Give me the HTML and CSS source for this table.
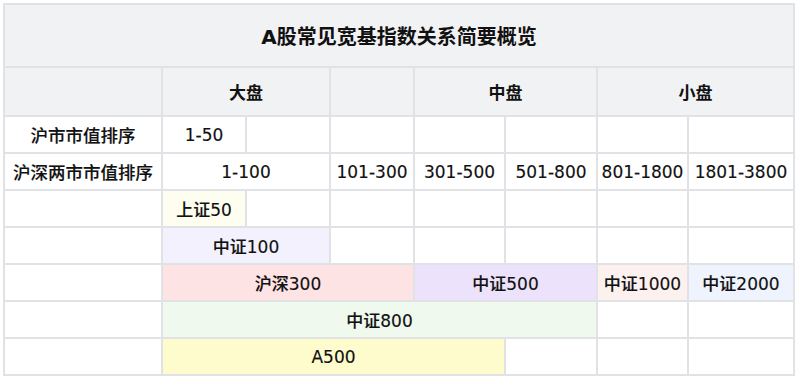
FILE: index.html
```html
<!DOCTYPE html>
<html lang="zh-CN">
<head>
<meta charset="utf-8">
<title>A股常见宽基指数关系简要概览</title>
<link rel="stylesheet" href="styles.css">
</head>
<body>
<div class="grid">
  <div class="cell head title">A股常见宽基指数关系简要概览</div>

  <div class="cell head"></div>
  <div class="cell head bold span2">大盘</div>
  <div class="cell head"></div>
  <div class="cell head bold span2">中盘</div>
  <div class="cell head bold span2">小盘</div>

  <div class="cell label">沪市市值排序</div>
  <div class="cell">1-50</div>
  <div class="cell"></div>
  <div class="cell"></div>
  <div class="cell"></div>
  <div class="cell"></div>
  <div class="cell"></div>
  <div class="cell"></div>

  <div class="cell label">沪深两市市值排序</div>
  <div class="cell span2">1-100</div>
  <div class="cell">101-300</div>
  <div class="cell">301-500</div>
  <div class="cell">501-800</div>
  <div class="cell">801-1800</div>
  <div class="cell">1801-3800</div>

  <div class="cell"></div>
  <div class="cell c-sz50">上证50</div>
  <div class="cell"></div>
  <div class="cell"></div>
  <div class="cell"></div>
  <div class="cell"></div>
  <div class="cell"></div>
  <div class="cell"></div>

  <div class="cell"></div>
  <div class="cell span2 c-zz100">中证100</div>
  <div class="cell"></div>
  <div class="cell"></div>
  <div class="cell"></div>
  <div class="cell"></div>
  <div class="cell"></div>

  <div class="cell"></div>
  <div class="cell span3 c-hs300">沪深300</div>
  <div class="cell span2 c-zz500">中证500</div>
  <div class="cell c-zz1000">中证1000</div>
  <div class="cell c-zz2000">中证2000</div>

  <div class="cell"></div>
  <div class="cell span5 c-zz800">中证800</div>
  <div class="cell"></div>
  <div class="cell"></div>

  <div class="cell"></div>
  <div class="cell span4 c-a500">A500</div>
  <div class="cell"></div>
  <div class="cell"></div>
  <div class="cell"></div>
</div>
</body>
</html>
```

FILE: styles.css
```css
html, body {
  margin: 0;
  padding: 0;
  background: #ffffff;
}

body {
  padding: 3px;
  font-family: "DejaVu Sans", "Noto Sans CJK SC", sans-serif;
  font-size: 17px;
  font-weight: 500;
  color: #111111;
}

.grid {
  display: grid;
  width: 788px;
  grid-template-columns: 156px 82px 82px 82px 89px 90px 89px 104px;
  grid-template-rows: 61px 47px repeat(7, 35px);
  gap: 2px;
  padding: 2px;
  background: #e1e2e5;
}

.cell {
  background: #ffffff;
  display: flex;
  align-items: center;
  justify-content: center;
  white-space: nowrap;
  -webkit-text-stroke: 0.15px #111111;
}

.head {
  background: #f1f2f4;
}

.title {
  grid-column: span 8;
  font-size: 20px;
  font-weight: bold;
  -webkit-text-stroke: 0;
}

.bold {
  font-weight: bold;
  -webkit-text-stroke: 0;
}

.label {
  font-size: 17.5px;
}

.span2 { grid-column: span 2; }
.span3 { grid-column: span 3; }
.span4 { grid-column: span 4; }
.span5 { grid-column: span 5; }

.c-sz50 { background: #fefef0; }
.c-zz100 { background: #f3f1fe; }
.c-hs300 { background: #fde3e4; }
.c-zz500 { background: #ece2fc; }
.c-zz1000 { background: #fdf1f0; }
.c-zz2000 { background: #eef3fe; }
.c-zz800 { background: #eff9ee; }
.c-a500 { background: #fefccd; }
```
